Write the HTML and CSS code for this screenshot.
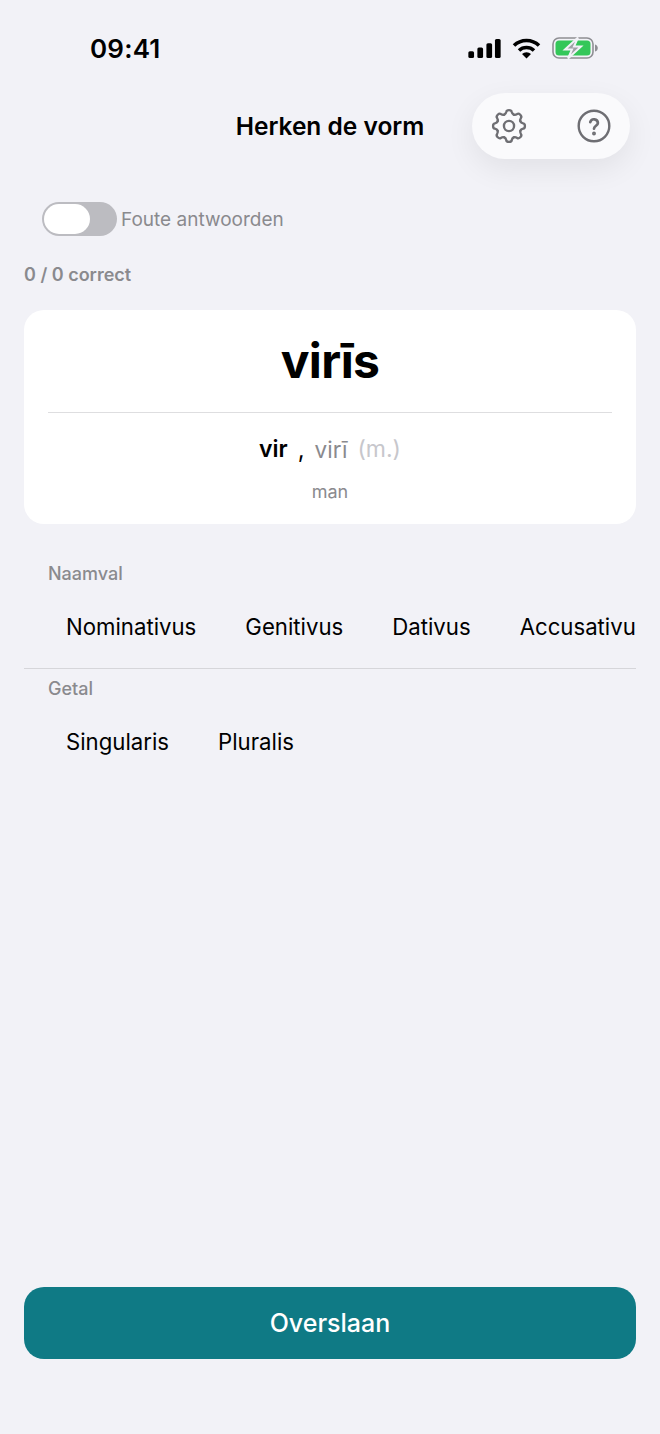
FILE: index.html
```html
<!DOCTYPE html>
<html lang="nl">
<head>
<meta charset="UTF-8">
<meta name="viewport" content="width=device-width, initial-scale=1.0">
<link rel="stylesheet" href="styles.css">
</head>
<body>

<div class="page">
  <div class="status-bar">
    <span class="status-time">09:41</span>
    <div class="status-icons">
      <svg class="icon-signal" width="33" height="19" viewBox="0 0 34 20">
        <rect x="0" y="13" width="6" height="7" rx="1.6"/>
        <rect x="9.5" y="9" width="6" height="11" rx="1.6"/>
        <rect x="19" y="4.5" width="6" height="15.5" rx="1.6"/>
        <rect x="28" y="0" width="6" height="20" rx="1.6"/>
      </svg>
      <svg class="icon-wifi" width="29" height="21" viewBox="0 0 29 21">
        <path d="M2 7.5 A18 18 0 0 1 27 7.5" fill="none" stroke="#000" stroke-width="3.6"/>
        <path d="M7 12.5 A11 11 0 0 1 22 12.5" fill="none" stroke="#000" stroke-width="3.6"/>
        <path d="M10 16 A6.4 6.4 0 0 1 19 16 L14.5 20.6 Z"/>
      </svg>
      <svg class="icon-battery" width="46" height="22" viewBox="0 0 46 22">
        <rect x="1" y="1" width="40" height="20" rx="6" fill="none" stroke="#8e8e93" stroke-width="1.6"/>
        <rect x="3.5" y="3.5" width="35" height="15" rx="3.500" fill="#34c759"/>
        <path d="M43 7.5 C45 8 45.800 9.500 45.800 11 C45.800 12.500 45 14 43 14.500 Z" fill="#8e8e93"/>
        <path d="M26 0.500 L13 12.500 H20 L16 21.500 L29 9.500 H22 Z" fill="#a0a0a5" stroke="#f2f2f7" stroke-width="2"/>
      </svg>
    </div>
  </div>

  <div class="nav">
    <div class="nav-title">Herken de vorm</div>
    <div class="nav-pill">
      <svg width="38" height="38" viewBox="0 0 24 24" fill="none" stroke="#6e6e73" stroke-width="1.5" stroke-linejoin="round" stroke-linecap="round">
        <defs>
          <path id="gear-tooth" d="M9.020 4.800C9.900 4.500 10.100 3.900 10.300 3C10.500 1.600 13.500 1.600 13.700 3C13.900 3.900 14.100 4.500 14.980 4.800"/>
        </defs>
        <use href="#gear-tooth"/>
        <use href="#gear-tooth" transform="rotate(45 12 12)"/>
        <use href="#gear-tooth" transform="rotate(90 12 12)"/>
        <use href="#gear-tooth" transform="rotate(135 12 12)"/>
        <use href="#gear-tooth" transform="rotate(180 12 12)"/>
        <use href="#gear-tooth" transform="rotate(225 12 12)"/>
        <use href="#gear-tooth" transform="rotate(270 12 12)"/>
        <use href="#gear-tooth" transform="rotate(315 12 12)"/>
        <circle cx="12" cy="12" r="3.200"/>
      </svg>
      <svg width="36" height="36" viewBox="0 0 24 24" fill="none" stroke="#6e6e73" stroke-width="1.6" stroke-linecap="round" stroke-linejoin="round">
        <circle cx="12" cy="12" r="10.200"/>
        <path d="M9.500 9.400a2.600 2.600 0 0 1 5.100.600c0 1.700-2.600 2-2.600 3.800" stroke-width="1.800"/>
        <circle cx="12" cy="17" r="0.500" fill="#6e6e73"/>
      </svg>
    </div>
  </div>

  <div class="toggle-row">
    <div class="toggle"><div class="toggle-knob"></div></div>
    <span class="toggle-label">Foute antwoorden</span>
  </div>

  <div class="score">0 / 0 correct</div>

  <div class="card">
    <div class="card-word">virīs</div>
    <div class="card-line"></div>
    <div class="card-forms">
      <span class="form-main">vir</span>
      <span class="form-comma">,</span>
      <span class="form-gen">virī</span>
      <span class="form-gender">(m.)</span>
    </div>
    <div class="card-meaning">man</div>
  </div>

  <div class="section section-first">
    <div class="section-label">Naamval</div>
    <div class="options">
      <span class="option">Nominativus</span>
      <span class="option">Genitivus</span>
      <span class="option">Dativus</span>
      <span class="option">Accusativus</span>
    </div>
  </div>
  <div class="section-line"></div>
  <div class="section">
    <div class="section-label">Getal</div>
    <div class="options">
      <span class="option">Singularis</span>
      <span class="option">Pluralis</span>
    </div>
  </div>

  <button type="button" class="skip-button">Overslaan</button>
</div>

</body>
</html>
```

FILE: styles.css
```css
body {
  margin: 0;
  background-color: #f2f2f7;
  font-family: 'Inter', 'Liberation Sans', sans-serif;
  color: #000;
}

.page {
  height: 1434px;
  display: flex;
  flex-direction: column;
  overflow: hidden;
}

/* Status bar */
.status-bar {
  height: 86px;
  padding: 10px 62px 0 90px;
  box-sizing: border-box;
  display: flex;
  justify-content: space-between;
  align-items: center;
}

.status-time {
  font-size: 26px;
  font-weight: 600;
  letter-spacing: 0.2px;
}

.status-icons {
  display: flex;
  align-items: center;
  gap: 11px;
}

/* Nav */
.nav {
  position: relative;
  height: 80px;
  display: flex;
  align-items: center;
  justify-content: center;
}

.nav-title {
  font-size: 24.5px;
  font-weight: 600;
}

.nav-pill {
  position: absolute;
  top: 7px;
  right: 30px;
  width: 158px;
  height: 66px;
  padding: 0 18px;
  box-sizing: border-box;
  border-radius: 33px;
  background-color: #fafafc;
  box-shadow: 0 10px 30px rgba(0, 0, 0, 0.07);
  display: flex;
  align-items: center;
  justify-content: space-between;
}

/* Toggle */
.toggle-row {
  margin: 36px 0 0 42px;
  display: flex;
  align-items: center;
  gap: 4px;
}

.toggle {
  width: 75px;
  height: 34px;
  padding: 2px;
  box-sizing: border-box;
  border-radius: 17px;
  background-color: #bcbcc1;
}

.toggle-knob {
  width: 46px;
  height: 30px;
  border-radius: 15px;
  background-color: #fff;
}

.toggle-label {
  font-size: 19px;
  color: #8a8a8e;
}

.score {
  margin: 28px 0 0 24px;
  font-size: 18px;
  line-height: 22px;
  font-weight: 600;
  color: #8a8a8e;
}

/* Card */
.card {
  margin: 24px 24px 0;
  height: 214px;
  padding: 0 24px;
  box-sizing: border-box;
  border-radius: 20px;
  background-color: #fff;
  display: flex;
  flex-direction: column;
  align-items: center;
}

.card-word {
  height: 102px;
  line-height: 102px;
  font-size: 48px;
  font-weight: 700;
  letter-spacing: -0.7px;
}

.card-line {
  align-self: stretch;
  height: 1px;
  background-color: #dedee0;
}

.card-forms {
  margin-top: 21px;
  height: 30px;
  display: flex;
  align-items: center;
  gap: 10px;
  font-size: 24px;
}

.form-main {
  font-size: 23px;
  font-weight: 600;
}

.form-gen {
  font-size: 22.5px;
  color: #8a8a8e;
}

.form-gender {
  font-size: 23px;
  color: #c7c7cc;
}

.card-meaning {
  margin-top: 17px;
  font-size: 18px;
  line-height: 22px;
  color: #8a8a8e;
}

/* Sections */
.section-first {
  margin-top: 39px;
}

.section-label {
  margin-left: 48px;
  font-size: 18px;
  line-height: 22px;
  font-weight: 500;
  color: #8a8a8e;
}

.options {
  margin: 0 24px;
  height: 83px;
  padding-left: 42px;
  display: flex;
  align-items: center;
  gap: 49px;
  overflow: hidden;
  white-space: nowrap;
}

.option {
  flex-shrink: 0;
  font-size: 22.2px;
}

.section-line {
  margin: 0 24px 9px;
  height: 1px;
  background-color: #d6d6da;
}

.skip-button {
  margin: auto 24px 75px;
  height: 72px;
  border: none;
  border-radius: 20px;
  background-color: #0f7a85;
  color: #fff;
  font-family: inherit;
  font-size: 25px;
  font-weight: 500;
}
```
